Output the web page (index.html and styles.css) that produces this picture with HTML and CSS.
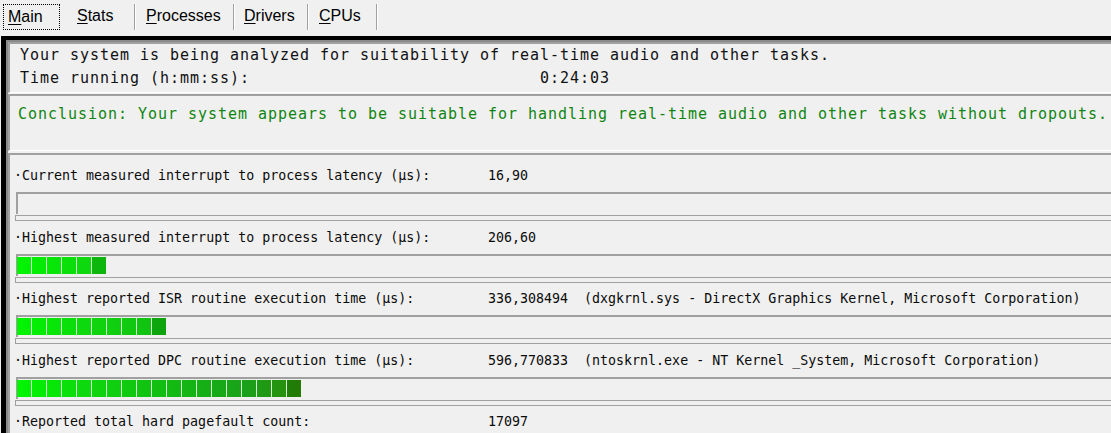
FILE: index.html
```html
<!DOCTYPE html>
<html>
<head>
<meta charset="utf-8">
<link rel="stylesheet" href="styles.css">
</head>
<body>
<div class="tabs">
  <div class="tab active"><u>M</u>ain</div>
  <div class="tab t-stats"><u>S</u>tats</div>
  <div class="tab t-proc"><u>P</u>rocesses</div>
  <div class="tab t-drv"><u>D</u>rivers</div>
  <div class="tab t-cpu"><u>C</u>PUs</div>
</div>
<div class="frame">
  <div class="panel status">
    <div class="line">Your system is being analyzed for suitability of real-time audio and other tasks.</div>
    <div class="line row"><span class="key-wide">Time running (h:mm:ss):</span><span>0:24:03</span></div>
  </div>
  <div class="panel conclusion">
    <div class="line green">Conclusion: Your system appears to be suitable for handling real-time audio and other tasks without dropouts.</div>
  </div>
  <div class="panel stats">
    <div class="item">
      <div class="label"><span class="key">·Current measured interrupt to process latency (µs):</span><span class="val">16,90</span></div>
      <div class="bar"></div>
      <div class="thin"></div>
    </div>
    <div class="item">
      <div class="label"><span class="key">·Highest measured interrupt to process latency (µs):</span><span class="val">206,60</span></div>
      <div class="bar"><div class="fill" style="width:89px"></div></div>
      <div class="thin"></div>
    </div>
    <div class="item">
      <div class="label"><span class="key">·Highest reported ISR routine execution time (µs):</span><span class="val">336,308494  (dxgkrnl.sys - DirectX Graphics Kernel, Microsoft Corporation)</span></div>
      <div class="bar"><div class="fill" style="width:149px"></div></div>
      <div class="thin"></div>
    </div>
    <div class="item">
      <div class="label"><span class="key">·Highest reported DPC routine execution time (µs):</span><span class="val">596,770833  (ntoskrnl.exe - NT Kernel _System, Microsoft Corporation)</span></div>
      <div class="bar"><div class="fill" style="width:284px"></div></div>
      <div class="thin"></div>
    </div>
    <div class="item">
      <div class="label"><span class="key">·Reported total hard pagefault count:</span><span class="val">17097</span></div>
    </div>
  </div>
</div>
</body>
</html>
```
FILE: styles.css
```css
html, body {
  margin: 0;
  padding: 0;
  background: #f0f0f0;
  overflow: hidden;
  width: 1111px;
  height: 433px;
}

.tabs {
  display: flex;
  height: 36px;
  box-sizing: border-box;
  padding: 4px 0 6px 3px;
  font-family: "Liberation Sans", Arial, sans-serif;
  font-size: 16px;
  color: #000;
}

.tab {
  line-height: 24px;
  box-sizing: border-box;
  padding-left: 10px;
  border-right: 1px solid #a0a0a0;
  box-shadow: 1px 0 0 #ffffff;
  white-space: nowrap;
}

.tab u {
  text-decoration-thickness: 1px;
  text-underline-offset: 2px;
}

.tab.active {
  width: 57px;
  padding-left: 4px;
  border: 1px dotted #000;
  box-shadow: none;
  margin-right: 6px;
  line-height: 24px;
}

.t-stats { width: 68px; margin-left: 1px; }
.t-proc { width: 98px; margin-left: 1px; }
.t-drv { width: 73px; margin-left: 1px; padding-left: 9px; }
.t-cpu { width: 68px; margin-left: 1px; }

.frame {
  margin-left: 1px;
  width: 1160px;
  height: 397px;
  overflow: hidden;
  border-left: 5px solid #000;
  border-top: 4px solid #000;
  padding: 2px 0 0 2px;
  box-shadow: inset 2px 2px 0 #8a8a8a;
  box-sizing: border-box;
}

.panel {
  border-top: 2px solid #a0a0a0;
  border-left: 2px solid #a0a0a0;
  border-bottom: 1px solid #ffffff;
  background: #f0f0f0;
}

.line {
  font-family: "DejaVu Sans Mono", "Liberation Mono", monospace;
  font-size: 15px;
  letter-spacing: 0.97px;
  line-height: 23px;
  color: #111;
  white-space: pre;
}

.row {
  display: flex;
}

.key-wide {
  width: 520px;
  flex: none;
}

.status {
  padding: 0 0 2px 10px;
}

.conclusion {
  margin-top: 1px;
  padding: 7px 0 24px 8px;
}

.green {
  color: #0f850f;
}

.stats {
  margin-top: 2px;
  padding-top: 5px;
  border-bottom: none;
  height: 300px;
}

.item {
  padding-bottom: 0.5px;
}

.label {
  display: flex;
  height: 32px;
  line-height: 32px;
  padding-left: 4px;
  font-family: "DejaVu Sans Mono", "Liberation Mono", monospace;
  font-size: 13.3px;
  color: #0a0a0a;
  white-space: pre;
}

.key {
  width: 474px;
  flex: none;
}

.bar {
  margin-left: 6px;
  height: 22px;
  box-sizing: border-box;
  border-top: 2px solid #a0a0a0;
  border-left: 2px solid #a0a0a0;
  padding-top: 1px;
}

.fill {
  position: relative;
  height: 17px;
  margin-left: -1px;
  background-image:
    repeating-linear-gradient(to right, transparent 0 14px, #d6f6d6 14px 15px),
    linear-gradient(to right, #00f600 0, #0ed80e 70px, #12bc12 150px, #1aa01a 230px, #2c8a06 285px);
  background-size: auto, 285px 100%;
  background-repeat: repeat, no-repeat;
}

.fill::after {
  content: "";
  position: absolute;
  right: 0;
  top: 0;
  width: 14px;
  height: 100%;
  background: rgba(0, 50, 0, 0.18);
}

.thin {
  margin: 1px 0 0 5px;
  height: 6px;
  box-sizing: border-box;
  border: 1px solid #a0a0a0;
  border-right: none;
}
```
